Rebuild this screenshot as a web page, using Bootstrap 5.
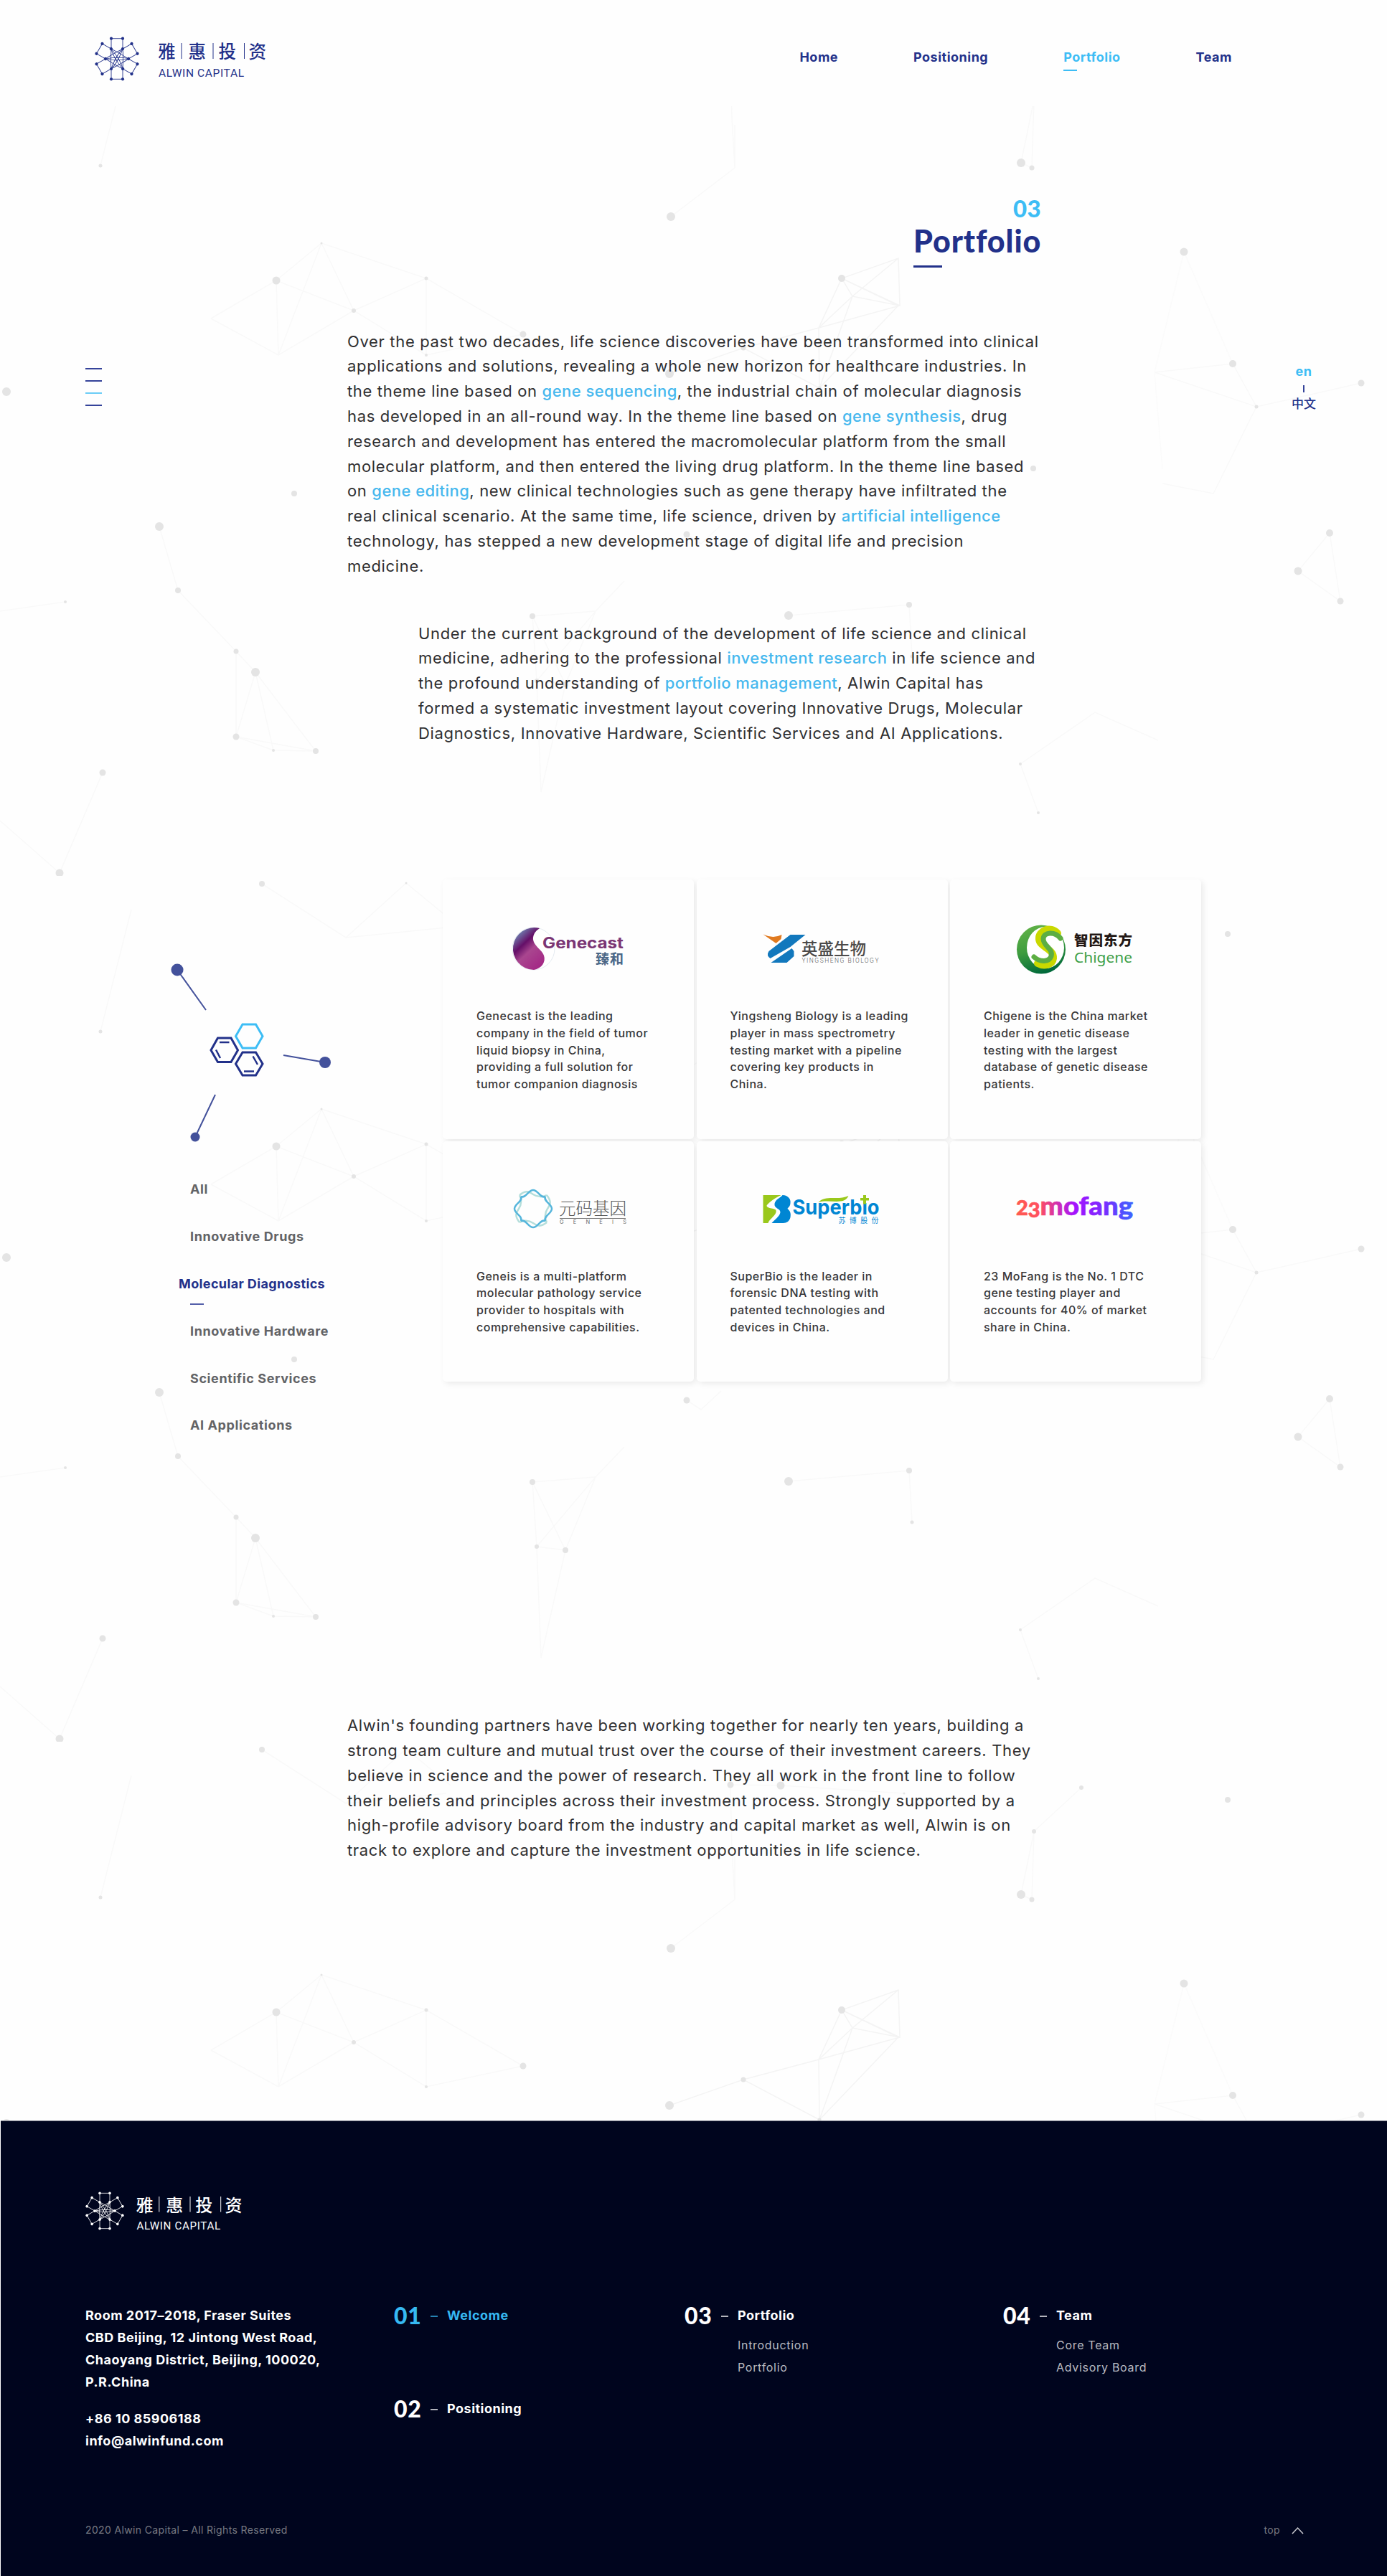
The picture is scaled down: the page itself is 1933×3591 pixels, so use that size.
<!DOCTYPE html>
<html lang="en">
<head>
<meta charset="utf-8">
<meta name="viewport" content="width=device-width, initial-scale=1">
<title>Alwin Capital – Portfolio</title>
<link href="https://cdn.jsdelivr.net/npm/bootstrap@5.3.0/dist/css/bootstrap.min.css" rel="stylesheet">
<style>
:root{--navy:#22318a;--sky:#3dbdf5;--ink:#373739}
body{font-family:Inter,"Noto Sans CJK SC",sans-serif;color:var(--ink);background:#fefefe;letter-spacing:.5px;min-width:1933px}
a{color:inherit;text-decoration:none}
svg{display:block}
svg text{letter-spacing:0}
.page{width:1933px;height:3591px;overflow:hidden}
.net{left:0;top:0;z-index:0}
.site-head{height:148px;padding:47px 216px 0 128px;background:#fefefe;z-index:2}
.brand-navy{color:var(--navy)}
.main-nav{gap:105px;margin-top:17px;font-weight:700;font-size:18px;line-height:32px;color:var(--navy)}
.main-nav a{position:relative;white-space:nowrap}
.main-nav .on{color:var(--sky)}
.main-nav .on::after{content:"";position:absolute;left:0;top:33px;width:19px;height:2px;background:var(--sky)}
.content{height:2808px;z-index:1}
.col-text{margin-left:484px;width:967px}
.title-block{width:178px;margin-left:auto;padding-top:122px;font-family:Lato,sans-serif;font-weight:900}
.title-no{font-size:33px;line-height:40px;color:var(--sky);letter-spacing:.3px}
.title-main{font-size:43px;line-height:52px;color:var(--navy);letter-spacing:.9px;margin:0;font-weight:900;white-space:nowrap}
.title-rule{width:40px;height:3px;margin-top:8px;background:var(--navy)}
.body-text{font-size:22px;line-height:34.8px;letter-spacing:.66px;font-weight:400;color:#2f2f31;white-space:nowrap;margin:0}
.body-text b{font-weight:500;color:#46b8ee;letter-spacing:.45px}
.intro{margin-top:85.6px}
.intro2{margin:59px 0 0 99px}
.ticks{left:119px;top:513px;gap:15px;z-index:3}
.ticks i{width:23px;height:2px;background:#35439a}
.ticks .on{background:#6bcdf7}
.langs{left:1787px;top:503px;width:60px;z-index:3;font-size:18px;line-height:30px;color:var(--navy);font-weight:700}
.langs i{width:2px;height:10px;background:#35439a;margin:4px 0 1px}
.langs .zh{font-size:17px;letter-spacing:0;font-weight:500}
.board{margin-top:186.4px}
.side{width:617px;padding:109px 0 0 230px}
.cats{margin:24.5px 0 0 35px;padding:0;list-style:none;font-size:18px;font-weight:700;letter-spacing:.6px;line-height:65.8px;color:#626366}
.cats .on{position:relative;left:-16px;color:var(--navy);letter-spacing:.37px}
.cats .on::after{content:"";position:absolute;left:16px;top:60px;width:19px;height:2px;background:#5560aa}
.tiles{width:1057px;gap:3.5px}
.tile{width:350px;height:362px;background:#fefefe;border-radius:5px;box-shadow:3px 3px 8px rgba(0,0,0,.08)}
.tile.low{height:335px}
.tile p{margin:0 0 0 47px;font-size:16px;line-height:23.6px;font-weight:500;white-space:nowrap}
.outro{margin-top:368px}
.foot{height:635px;margin-left:1px;background:#00051e;border-top:1px solid #7d7f8b;color:#fff;padding:94px 0 0 118px;z-index:2}
.foot-cols{margin-top:99px;height:305px}
.addr{width:430px;font-size:18px;font-weight:700;line-height:31px}
.addr p{margin:0 0 20px;white-space:nowrap}
.f-item{display:flex;align-items:flex-start;height:130.4px}
.f-no{font:900 32px/40px Lato,sans-serif;letter-spacing:.8px;margin-top:-4px;width:74px;height:40px;display:flex;align-items:center}
.f-no::after{content:"";width:10px;height:2px;margin:2px 0 0 12px;background:currentColor;opacity:.7}
.f-lab{font-size:18px;line-height:31px;font-weight:700;white-space:nowrap}
.f-lab span{display:block;font-size:16px;font-weight:400;letter-spacing:.7px;color:#b9bbc2}
.f-lab span:first-of-type{margin-top:10.7px}
.c1{width:405px}.c2{width:444px}
.foot-end{font-size:14px;line-height:20px;color:#777981;padding-right:116px;letter-spacing:.36px}
</style>
</head>
<body>
<div class="page position-relative">
<svg class="net position-absolute" width="1933" height="2956" viewBox="0 0 1933 2956" aria-hidden="true">
<defs>
<symbol id="tile-net" viewBox="0 0 1933 1207" width="1933" height="1207">
<g fill="none" stroke="#f9f9f9" stroke-width="1.5">
<path d="M365 11L482 86L566 10L628 61M482 86L622 72M183 47L140 217M294 430L385 377L448 325L493 419L594 374L729 452L594 481L493 419L388 481L385 377L493 419M294 430L388 481L448 325L594 374V481"/>
<path d="M1018 60L1088 61L1260 72M1507 64L1441 125L1423 213L1438 220L1441 125M1018 60L1020 150L1024 220L935 288M1024 220V160"/>
<path stroke="#f4f4f4" d="M933 507L1036 471L1142 527L1252 412L1173 374L1252 346L1254 412L1188 399L1141 443L1036 471M1173 374L1141 443L1142 527L1188 399L1173 374L1254 412M1188 399L1252 346M1141 443L1254 412"/>
<path d="M1609 505L1718 493L1751 553L1609 505M1751 553L1897 520M1751 553L1691 674L1620 660"/>
<path stroke="#fbfbfb" d="M1650 337L1718 493M1650 337L1609 505L1620 640"/>
<path d="M957 731L977 744L1005 718M222 720L248 809L329 894L356 923L329 1013L381 1032L440 1033L329 1013V894M356 923L381 1032M356 923L440 1033M0 838L91 825"/>
<path d="M742 845L830 838L748 935L788 940L754 1090L748 935L742 845L788 940L830 838L870 796M1099 844L1267 829L1271 901"/>
<path d="M1853 729L1809 782L1868 824L1853 729M1447 1119L1422 1051L1526 979L1614 1018M143 1063L83 1203L0 1130"/>
</g>
<g fill="#e4e4e4">
<circle cx="365" cy="11" r="4"/><circle cx="566" cy="10" r="1.5"/><circle cx="140" cy="217" r="2.5"/><circle cx="1711" cy="81" r="4"/><circle cx="1018" cy="60" r="4.5"/><circle cx="1088" cy="61" r="5.5"/><circle cx="1260" cy="72" r="1.5"/><circle cx="1507" cy="64" r="3"/><circle cx="1441" cy="125" r="3"/><circle cx="1423" cy="213" r="6"/><circle cx="1438" cy="220" r="3.5"/><circle cx="935" cy="288" r="6"/>
<circle cx="385" cy="377" r="5.5"/><circle cx="448" cy="325" r="1.5"/><circle cx="493" cy="419" r="3"/><circle cx="594" cy="374" r="2.5"/><circle cx="729" cy="452" r="4.5"/><circle cx="594" cy="481" r="2"/><circle cx="1173" cy="374" r="5"/><circle cx="1036" cy="471" r="3.5"/><circle cx="933" cy="507" r="6"/><circle cx="1142" cy="527" r="2.5"/><circle cx="1650" cy="337" r="5.5"/><circle cx="1718" cy="493" r="5"/><circle cx="1897" cy="520" r="4.5"/><circle cx="1751" cy="553" r="2.5"/><circle cx="9" cy="532" r="6"/>
<circle cx="1440" cy="639" r="4"/><circle cx="957" cy="731" r="4.5"/><circle cx="410" cy="674" r="4"/><circle cx="222" cy="720" r="6"/><circle cx="248" cy="809" r="4"/><circle cx="329" cy="894" r="3.5"/><circle cx="356" cy="923" r="6"/><circle cx="329" cy="1013" r="4.5"/><circle cx="381" cy="1032" r="2"/><circle cx="440" cy="1033" r="4"/><circle cx="143" cy="1063" r="4.5"/><circle cx="83" cy="1203" r="5.5"/><circle cx="91" cy="825" r="2"/>
<circle cx="742" cy="845" r="4"/><circle cx="748" cy="935" r="3"/><circle cx="788" cy="940" r="4"/><circle cx="1099" cy="844" r="6"/><circle cx="1267" cy="829" r="4"/><circle cx="1271" cy="901" r="2.5"/><circle cx="1853" cy="729" r="5"/><circle cx="1809" cy="782" r="5.5"/><circle cx="1868" cy="824" r="4.5"/><circle cx="1422" cy="1051" r="2"/><circle cx="1447" cy="1119" r="2"/>
</g>
</symbol>
<symbol id="emblem" viewBox="-32 -32 64 64">
<g id="petals" fill="none" stroke="currentColor" stroke-width=".9">
<g id="petal"><path d="M-8 -14V-28.3H8V-14M-8 -14Q-6 -3 8 14M-8 -14Q2 -9 16 0"/><g fill="currentColor" stroke="none"><circle cx="-8" cy="-28.3" r="2.1"/><circle cx="8" cy="-28.3" r="2.1"/><circle cx="8" cy="-14" r="2.1"/></g></g>
<use href="#petal" transform="rotate(60)"/><use href="#petal" transform="rotate(120)"/><use href="#petal" transform="rotate(180)"/><use href="#petal" transform="rotate(240)"/><use href="#petal" transform="rotate(300)"/>
</g>
</symbol>
<symbol id="wordmark" viewBox="0 0 152 54">
<g fill="currentColor"><g font-family="Noto Sans CJK SC" font-size="24.5" font-weight="500"><text x="-1" y="24">雅</text><text x="41.500" y="24">惠</text><text x="83.500" y="24">投</text><text x="125.500" y="24">资</text></g>
<path d="M31.500 3h1v22h-1zM75.500 3h1v22h-1zM119 3h1v22h-1z"/>
<text x="0" y="49.500" font-family="Roboto" font-weight="400" font-size="15.500" textLength="119">ALWIN CAPITAL</text></g>
</symbol>
</defs>
<use href="#tile-net" y="14"/><use href="#tile-net" y="1221"/><use href="#tile-net" y="2428"/>
</svg>

<header class="site-head d-flex justify-content-between position-relative">
<a href="#" class="brand-navy d-flex"><svg width="70" height="70" viewBox="-35 -35 70 70"><use href="#emblem" x="-32" y="-32" width="64" height="64"/></svg><svg style="margin:10px 0 0 23px" width="152" height="54"><use href="#wordmark" width="152" height="54"/></svg></a>
<nav class="main-nav d-flex"><a href="#">Home</a><a href="#">Positioning</a><a href="#" class="on">Portfolio</a><a href="#">Team</a></nav>
</header>

<div class="ticks position-absolute d-flex flex-column"><i></i><i></i><i class="on"></i><i></i></div>
<div class="langs position-absolute d-flex flex-column align-items-center"><a href="#" style="color:var(--sky)">en</a><i></i><a href="#" class="zh">中文</a></div>

<main class="content position-relative">
<section class="col-text">
<div class="title-block"><div class="title-no text-end">03</div><h1 class="title-main">Portfolio</h1><div class="title-rule"></div></div>
<p class="body-text intro">Over the past two decades, life science discoveries have been transformed into clinical<br>applications and solutions, revealing a whole new horizon for healthcare industries. In<br>the theme line based on <b>gene sequencing</b>, the industrial chain of molecular diagnosis<br>has developed in an all-round way. In the theme line based on <b>gene synthesis</b>, drug<br>research and development has entered the macromolecular platform from the small<br>molecular platform, and then entered the living drug platform. In the theme line based<br>on <b>gene editing</b>, new clinical technologies such as gene therapy have infiltrated the<br>real clinical scenario. At the same time, life science, driven by <b>artificial intelligence</b><br>technology, has stepped a new development stage of digital life and precision<br>medicine.</p>
<p class="body-text intro2">Under the current background of the development of life science and clinical<br>medicine, adhering to the professional <b>investment research</b> in life science and<br>the profound understanding of <b>portfolio management</b>, Alwin Capital has<br>formed a systematic investment layout covering Innovative Drugs, Molecular<br>Diagnostics, Innovative Hardware, Scientific Services and AI Applications.</p>
</section>

<section class="board d-flex align-items-start">
<aside class="side flex-shrink-0">
<svg width="240" height="266" viewBox="230 1335 240 266">
<g stroke="#43519b" stroke-width="2" fill="#43519b"><path d="M247 1352L287 1408M453 1481L395 1471M272 1585L300 1526"/><g stroke="none"><circle cx="247" cy="1352" r="8.500"/><circle cx="453" cy="1481" r="8"/><circle cx="272" cy="1585" r="6.500"/></g></g>
<g fill="none" stroke-width="3" stroke="#22318a"><path stroke="#3dbdf5" d="M328.500 1444.500L338 1428H356.500L366 1444.500L356.500 1461H338z"/><path d="M294 1464L303.500 1447H322L331.500 1464L322 1480.500H303.500zM328.500 1483L338 1467H356.500L366 1483L356.500 1499H338z"/><path stroke-width="2.500" d="M306 1453H319.500M301 1463.500L307 1475M352.500 1472.500L359 1484M340 1493.500H354"/></g>
</svg>
<ul class="cats"><li>All</li><li>Innovative Drugs</li><li class="on">Molecular Diagnostics</li><li>Innovative Hardware</li><li>Scientific Services</li><li>AI Applications</li></ul>
</aside>
<div class="tiles d-flex flex-wrap">
<article class="tile">
<svg width="350" height="179.400" viewBox="617 1226 350 179.400">
<defs><linearGradient id="gc" x1="0" y1="0" x2=".7" y2="1"><stop offset="0" stop-color="#8ecbe0"/><stop offset=".2" stop-color="#6d6fa5"/><stop offset=".42" stop-color="#650f68"/><stop offset=".62" stop-color="#a9468f"/><stop offset="1" stop-color="#a42a86"/></linearGradient></defs>
<circle cx="743.500" cy="1322.500" r="29.500" fill="#fff" stroke="#e4eaf0"/>
<path d="M752 1294A29.500 29.500 0 1 0 744 1352C755 1350 761 1341 758 1332C755 1323 742 1318 743 1307C744 1300 748 1297 752 1294z" fill="url(#gc)"/>
<text x="756" y="1322.500" font-family="Inter" font-weight="700" font-size="21" textLength="113" lengthAdjust="spacingAndGlyphs" fill="#7a3574">Genecast</text>
<text x="830" y="1344.500" font-family="Noto Sans CJK SC" font-weight="700" font-size="19" textLength="39" fill="#4b6787">臻和</text></svg>
<p>Genecast is the leading<br>company in the field of tumor<br>liquid biopsy in China,<br>providing a full solution for<br>tumor companion diagnosis</p></article>
<article class="tile">
<svg width="350" height="179.400" viewBox="970.500 1226 350 179.400"><path fill="#e07a20" d="M1063 1302.500Q1077 1309 1089 1303L1088 1309L1081 1315z"/><path fill="#1278bd" d="M1122 1303H1101L1071 1326Q1067 1332 1073 1336L1101 1320zM1103 1322L1106 1326V1333L1096 1342H1074z"/>
<text x="1116.500" y="1331.500" font-family="Noto Sans CJK SC" font-weight="500" font-size="22.500" fill="#4c4a4a">英盛生物</text><text x="1117" y="1342" font-family="Roboto" font-size="8.500" font-weight="300" textLength="107" fill="#555">YINGSHENG BIOLOGY</text></svg>
<p>Yingsheng Biology is a leading<br>player in mass spectrometry<br>testing market with a pipeline<br>covering key products in<br>China.</p></article>
<article class="tile">
<svg width="350" height="179.400" viewBox="1324 1226 350 179.400">
<defs><linearGradient id="cg" x1=".2" y1="0" x2=".5" y2="1"><stop offset="0" stop-color="#62b347"/><stop offset=".5" stop-color="#3e9c3f"/><stop offset="1" stop-color="#00693a"/></linearGradient></defs>
<circle cx="1451" cy="1323.500" r="34" fill="url(#cg)"/><ellipse cx="1457" cy="1321" rx="26" ry="29" fill="#fff"/>
<g fill="none" stroke-linecap="round"><path d="M1474 1301C1464 1290 1447 1297 1448 1309C1449 1321 1469 1322 1468 1336C1467 1345 1455 1348 1446 1343" stroke="#c9d800" stroke-width="10"/><path d="M1478 1308C1470 1298 1454 1299 1454 1309C1454 1319 1468 1322 1465 1333C1462 1341 1450 1342 1441 1334" stroke="#5cae43" stroke-width="7"/></g>
<text x="1497" y="1318.500" font-family="Noto Sans CJK SC" font-weight="900" font-size="19.500" textLength="81" fill="#231815">智因东方</text><text x="1497" y="1342" font-family="Noto Sans" font-size="20.500" textLength="81" lengthAdjust="spacingAndGlyphs" fill="#3d9f47">Chigene</text></svg>
<p>Chigene is the China market<br>leader in genetic disease<br>testing with the largest<br>database of genetic disease<br>patients.</p></article>
<article class="tile low">
<svg width="350" height="176.400" viewBox="617 1591 350 176.400"><g transform="translate(743 1685)" fill="none"><g id="rib"><path stroke="#b4dedb" stroke-width="2.500" d="M-19 -19C-10 -26 -6 -24 0 -20S14 -16 19 -19"/><path stroke="#56b6dc" stroke-width="2.500" d="M-17 -17C-10 -14 -7 -26 0 -26S10 -14 17 -17"/></g><use href="#rib" transform="rotate(90)"/><use href="#rib" transform="rotate(180)"/><use href="#rib" transform="rotate(270)"/></g>
<text x="779" y="1693.500" font-family="Noto Sans CJK SC" font-weight="300" font-size="23.500" fill="#555">元码基因</text><path d="M780 1698.500H872" stroke="#777"/><text x="780" y="1706" font-family="Inter" font-size="7.500" textLength="93" fill="#666">GENEIS</text></svg>
<p>Geneis is a multi-platform<br>molecular pathology service<br>provider to hospitals with<br>comprehensive capabilities.</p></article>
<article class="tile low">
<svg width="350" height="176.400" viewBox="970.500 1591 350 176.400"><path fill="#9ac81c" d="M1063 1666H1088C1076 1672 1068 1679 1068 1681C1069 1686 1084 1683 1081 1690C1079 1696 1071 1700 1070 1705H1063z"/><path fill="#0086d3" d="M1090 1666C1098 1666 1102 1672 1101 1677C1101 1682 1097 1684 1097 1685C1101 1688 1102 1692 1101 1697C1100 1702 1096 1705 1091 1705H1075C1079 1700 1086 1696 1087 1690C1087 1684 1078 1685 1079 1678C1080 1672 1087 1670 1090 1666z"/>
<text x="1104" y="1693" font-family="Inter" font-weight="700" font-size="29" textLength="121" lengthAdjust="spacingAndGlyphs" fill="#0086d3">Superbıo</text><path fill="#9ac81c" d="M1140 1676C1150 1665 1168 1674 1182 1667C1176 1681 1155 1671 1140 1676zM1202.500 1666h4v4h4v3.500h-4v5h-4v-5h-4v-3.500h4z"/><text x="1168" y="1705" font-family="Noto Sans CJK SC" font-size="10" textLength="56" fill="#0086d3">苏博股份</text></svg>
<p>SuperBio is the leader in<br>forensic DNA testing with<br>patented technologies and<br>devices in China.</p></article>
<article class="tile low">
<svg width="350" height="176.400" viewBox="1324 1591 350 176.400"><defs><linearGradient id="mf"><stop offset="0" stop-color="#ff5a50"/><stop offset=".2" stop-color="#ff5060"/><stop offset=".5" stop-color="#a412ff"/><stop offset=".75" stop-color="#7a2cff"/><stop offset="1" stop-color="#3c64ff"/></linearGradient></defs><text x="1416" y="1694" font-family="Lato" font-weight="900" font-size="37" textLength="163" lengthAdjust="spacingAndGlyphs" fill="url(#mf)" stroke="url(#mf)" stroke-width=".6"><tspan font-size="28">2</tspan><tspan font-size="28" dy="3">3</tspan><tspan dy="-3">mofang</tspan></text></svg>
<p>23 MoFang is the No. 1 DTC<br>gene testing player and<br>accounts for 40% of market<br>share in China.</p></article>
</div>
</section>

<section class="col-text"><p class="body-text outro">Alwin's founding partners have been working together for nearly ten years, building a<br>strong team culture and mutual trust over the course of their investment careers. They<br>believe in science and the power of research. They all work in the front line to follow<br>their beliefs and principles across their investment process. Strongly supported by a<br>high-profile advisory board from the industry and capital market as well, Alwin is on<br>track to explore and capture the investment opportunities in life science.</p></section>
</main>

<footer class="foot position-relative">
<a href="#" class="d-flex"><svg width="54" height="62" viewBox="-31 -35 62 70"><use href="#emblem" x="-32" y="-32" width="64" height="64"/></svg><svg style="margin:8px 0 0 17px" width="150" height="53"><use href="#wordmark" width="150" height="53"/></svg></a>
<div class="foot-cols d-flex">
<div class="addr"><p>Room 2017–2018, Fraser Suites<br>CBD Beijing, 12 Jintong West Road,<br>Chaoyang District, Beijing, 100020,<br>P.R.China</p><p>+86 10 85906188<br>info@alwinfund.com</p></div>
<div class="c1"><div class="f-item" style="color:#36b9f2"><div class="f-no">01</div><div class="f-lab">Welcome</div></div><div class="f-item"><div class="f-no">02</div><div class="f-lab">Positioning</div></div></div>
<div class="c2"><div class="f-item"><div class="f-no">03</div><div class="f-lab">Portfolio<span>Introduction</span><span>Portfolio</span></div></div></div>
<div class="f-item"><div class="f-no">04</div><div class="f-lab">Team<span>Core Team</span><span>Advisory Board</span></div></div>
</div>
<div class="foot-end d-flex justify-content-between"><span>2020 Alwin Capital – All Rights Reserved</span><a href="#" class="d-flex align-items-center" style="gap:16px">top<svg width="17" height="11" viewBox="0 0 17 11"><path d="M1 10L8.500 2L16 10" fill="none" stroke="#c9cad0" stroke-width="1.500"/></svg></a></div>
</footer>
</div>
<script src="https://cdn.jsdelivr.net/npm/bootstrap@5.3.0/dist/js/bootstrap.bundle.min.js"></script>
</body>
</html>
